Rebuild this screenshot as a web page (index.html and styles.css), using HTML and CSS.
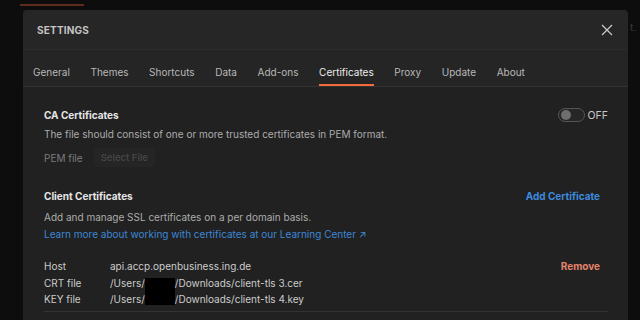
FILE: index.html
```html
<!DOCTYPE html>
<html lang="en">
<head>
  <meta charset="UTF-8">
  <title>Settings</title>
  <link rel="stylesheet" href="styles.css">
</head>
<body>
  <div class="backdrop">
    <div class="app-strip"><span class="app-tab-line"></span></div>
    <span class="behind-text">t.</span>

    <div class="modal">
      <div class="modal-header">
        <h1 class="modal-title">SETTINGS</h1>
        <button class="close-btn" aria-label="Close">
          <svg width="12" height="12" viewBox="0 0 12 12"><path d="M1 1L11 11M11 1L1 11" stroke="#c8c8c8" stroke-width="1.3" fill="none"/></svg>
        </button>
      </div>

      <nav class="tabs">
        <a class="tab">General</a>
        <a class="tab">Themes</a>
        <a class="tab">Shortcuts</a>
        <a class="tab">Data</a>
        <a class="tab">Add-ons</a>
        <a class="tab active">Certificates</a>
        <a class="tab">Proxy</a>
        <a class="tab">Update</a>
        <a class="tab">About</a>
      </nav>

      <div class="modal-body">
        <section class="section">
          <div class="section-head">
            <h2 class="section-title">CA Certificates</h2>
            <div class="toggle-wrap">
              <span class="toggle"><span class="knob"></span></span>
              <span class="toggle-label">OFF</span>
            </div>
          </div>
          <p class="desc">The file should consist of one or more trusted certificates in PEM format.</p>
          <div class="pem-row">
            <span class="pem-label">PEM file</span>
            <button class="select-btn" disabled>Select File</button>
          </div>
        </section>

        <section class="section client">
          <div class="section-head">
            <h2 class="section-title">Client Certificates</h2>
            <a class="add-link">Add Certificate</a>
          </div>
          <p class="desc desc-client">Add and manage SSL certificates on a per domain basis.</p>
          <a class="learn-link">Learn more about working with certificates at our Learning Center ↗</a>

          <div class="cert">
            <div class="cert-row">
              <span class="cert-key">Host</span>
              <span class="cert-val">api.accp.openbusiness.ing.de</span>
              <a class="remove-link">Remove</a>
            </div>
            <div class="cert-row">
              <span class="cert-key">CRT file</span>
              <span class="cert-val">/Users/<span class="redact redact-top"></span>/Downloads/client-tls 3.cer</span>
            </div>
            <div class="cert-row">
              <span class="cert-key">KEY file</span>
              <span class="cert-val">/Users/<span class="redact redact-bottom"></span>/Downloads/client-tls 4.key</span>
            </div>
          </div>
        </section>
      </div>
    </div>
  </div>
</body>
</html>
```

FILE: styles.css
```css
* { margin: 0; padding: 0; box-sizing: border-box; }
body {
  font-family: Inter, "Noto Sans", sans-serif;
  font-size: 10px;
  background: #0d0d0d;
  width: 640px;
  height: 320px;
  overflow: hidden;
}
.backdrop {
  position: relative;
  height: 320px;
  padding: 10px 12px 0 23px;
}
.app-strip {
  position: absolute;
  left: 0; top: 0;
  width: 100%;
  height: 10px;
}
.app-tab-line {
  position: absolute;
  left: 20px; top: 4px;
  width: 64px; height: 2px;
  background: #5e2c1c;
}
.behind-text {
  position: absolute;
  left: 630px; top: 21px;
  font-size: 10px;
  color: #3a3a3a;
}
.modal {
  width: 605px;
  height: 320px;
  background: #212121;
  border-radius: 4px 4px 0 0;
  overflow: hidden;
}
.modal-header {
  height: 40px;
  background: #262626;
  display: flex;
  align-items: center;
  justify-content: space-between;
  padding: 0 14px 0 14px;
  border-bottom: 1px solid #2c2c2c;
}
.modal-title {
  font-size: 10px;
  font-weight: 700;
  letter-spacing: 0.2px;
  color: #c4c4c4;
}
.close-btn {
  background: none;
  border: none;
  width: 14px; height: 14px;
  display: flex;
  align-items: center;
  justify-content: center;
}
.tabs {
  display: flex;
  gap: 20.6px;
  height: 37px;
  padding: 0 10px;
  background: #252525;
  border-bottom: 1px solid #333;
}
.tab {
  color: #b8b8b8;
  display: flex;
  align-items: center;
  padding-top: 9px;
  border-bottom: 2px solid transparent;
}
.tab.active {
  color: #ededed;
  border-bottom-color: #f26b3a;
}
.modal-body {
  padding: 21px 20px 0 21px;
}
.section-head {
  display: flex;
  align-items: center;
  justify-content: space-between;
  height: 14px;
}
.section-title {
  font-size: 10px;
  font-weight: 700;
  color: #e6e6e6;
}
.desc {
  color: #acacac;
  margin-top: 6px;
}
.desc-client {
  margin-top: 8px;
}
.toggle-wrap {
  display: flex;
  align-items: center;
  gap: 3px;
}
.toggle {
  width: 27px; height: 14px;
  border: 1px solid #555;
  border-radius: 7px;
  background: #262626;
  display: flex;
  align-items: center;
  padding-left: 2px;
}
.knob {
  width: 10px; height: 10px;
  border-radius: 50%;
  background: #6e6e6e;
}
.toggle-label {
  font-size: 10.5px;
  color: #c8c8c8;
}
.pem-row {
  display: flex;
  align-items: center;
  gap: 11px;
  margin-top: 8px;
  height: 19px;
}
.pem-label {
  color: #7c7c7c;
}
.select-btn {
  font-family: inherit;
  font-size: 9.5px;
  font-weight: 600;
  color: #444;
  background: #252525;
  border: none;
  border-radius: 3px;
  height: 19px;
  padding: 0 7px;
}
.client {
  margin-top: 22px;
}
.add-link {
  font-weight: 700;
  color: #3d8ade;
  margin-right: 8px;
}
.learn-link {
  display: block;
  color: #3d87d6;
  margin-top: 5px;
}
.cert {
  margin-top: 18px;
  padding-bottom: 3px;
  border-bottom: 1px solid #333;
}
.cert-row {
  display: flex;
  align-items: center;
  height: 16.5px;
}
.cert-key {
  width: 66px;
  color: #cccccc;
}
.cert-val {
  flex: 1;
  height: 100%;
  color: #cccccc;
  display: flex;
  align-items: center;
}
.redact {
  display: inline-block;
  width: 30px;
  background: #000;
}
.redact-top {
  align-self: flex-end;
  height: 13px;
}
.redact-bottom {
  align-self: flex-start;
  height: 14px;
}
.remove-link {
  font-weight: 700;
  color: #e5836c;
  margin-right: 8px;
}
```
